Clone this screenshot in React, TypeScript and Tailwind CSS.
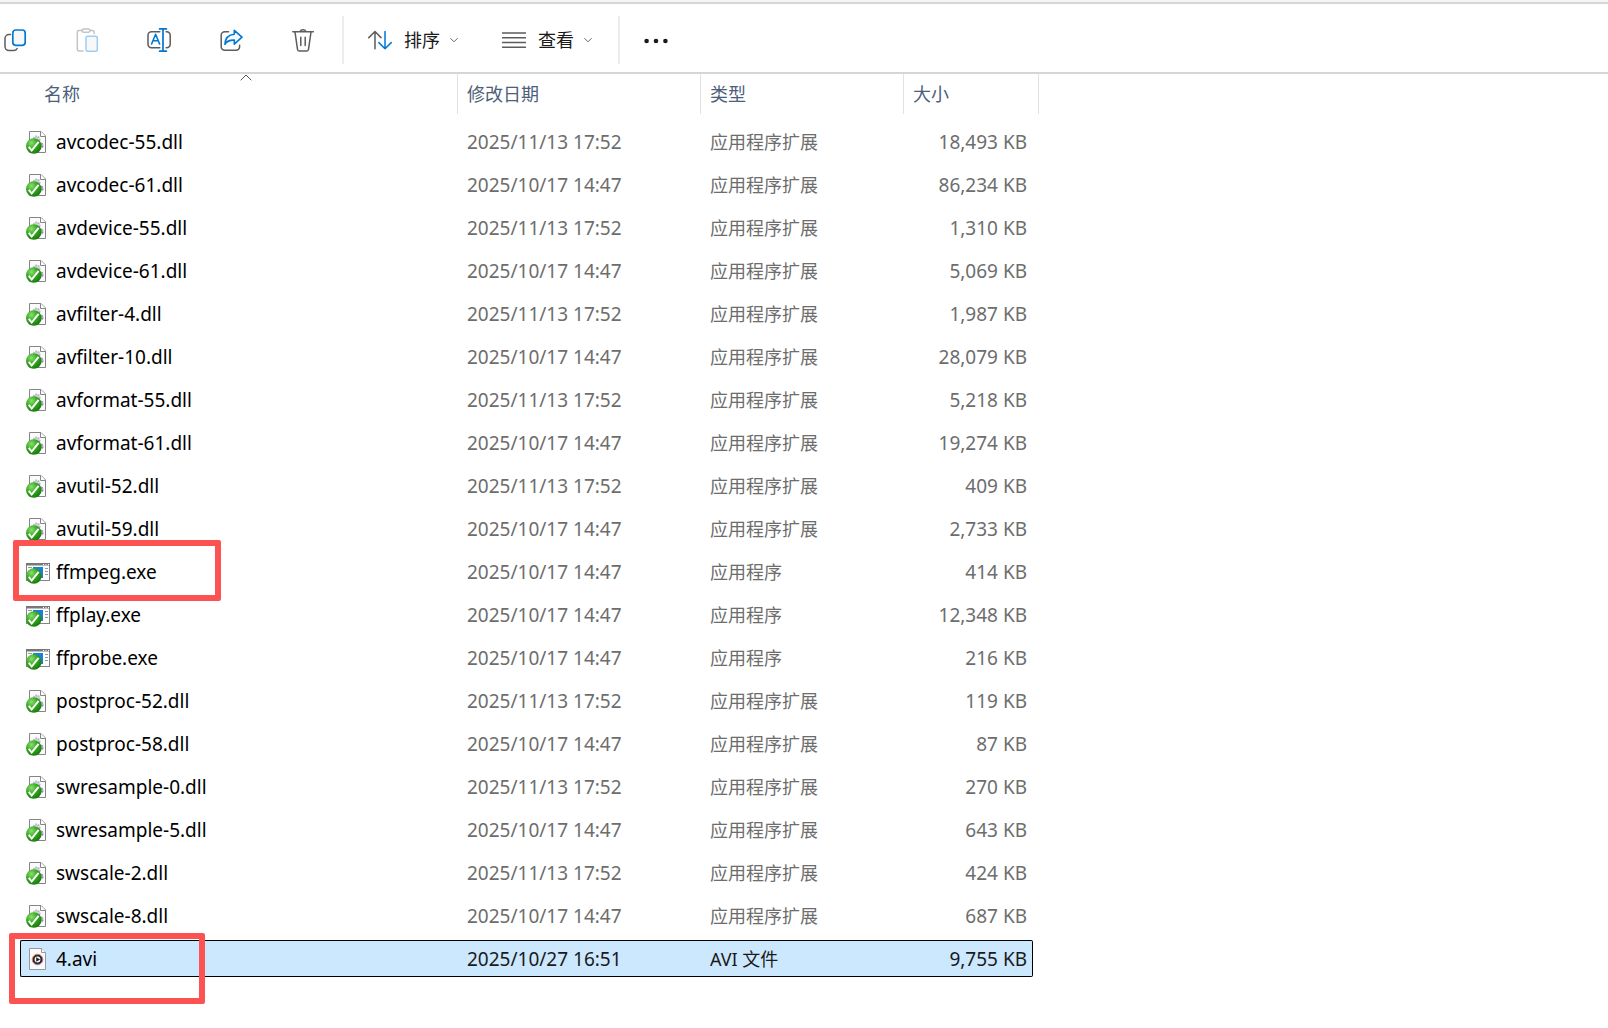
import type { ReactNode } from "react";

type FileKind = "dll" | "exe" | "avi";

type FileRow = {
  name: string;
  date: string;
  kind: FileKind;
  size: string;
  selected?: boolean;
  mark?: string; // classes of the red frame drawn around the row
};

const kindLabel: Record<FileKind, string> = {
  dll: "应用程序扩展",
  exe: "应用程序",
  avi: "AVI 文件",
};

const NOV = "2025/11/13 17:52";
const OCT = "2025/10/17 14:47";

const files: FileRow[] = [
  { name: "avcodec-55.dll", date: NOV, kind: "dll", size: "18,493 KB" },
  { name: "avcodec-61.dll", date: OCT, kind: "dll", size: "86,234 KB" },
  { name: "avdevice-55.dll", date: NOV, kind: "dll", size: "1,310 KB" },
  { name: "avdevice-61.dll", date: OCT, kind: "dll", size: "5,069 KB" },
  { name: "avfilter-4.dll", date: NOV, kind: "dll", size: "1,987 KB" },
  { name: "avfilter-10.dll", date: OCT, kind: "dll", size: "28,079 KB" },
  { name: "avformat-55.dll", date: NOV, kind: "dll", size: "5,218 KB" },
  { name: "avformat-61.dll", date: OCT, kind: "dll", size: "19,274 KB" },
  { name: "avutil-52.dll", date: NOV, kind: "dll", size: "409 KB" },
  { name: "avutil-59.dll", date: OCT, kind: "dll", size: "2,733 KB" },
  { name: "ffmpeg.exe", date: OCT, kind: "exe", size: "414 KB", mark: "-top-[10px] -left-[7px] w-[208px] h-[61px]" },
  { name: "ffplay.exe", date: OCT, kind: "exe", size: "12,348 KB" },
  { name: "ffprobe.exe", date: OCT, kind: "exe", size: "216 KB" },
  { name: "postproc-52.dll", date: NOV, kind: "dll", size: "119 KB" },
  { name: "postproc-58.dll", date: OCT, kind: "dll", size: "87 KB" },
  { name: "swresample-0.dll", date: NOV, kind: "dll", size: "270 KB" },
  { name: "swresample-5.dll", date: OCT, kind: "dll", size: "643 KB" },
  { name: "swscale-2.dll", date: NOV, kind: "dll", size: "424 KB" },
  { name: "swscale-8.dll", date: OCT, kind: "dll", size: "687 KB" },
  {
    name: "4.avi",
    date: "2025/10/27 16:51",
    kind: "avi",
    size: "9,755 KB",
    selected: true,
    mark: "-top-1 -left-[11px] w-[196px] h-[71px]",
  },
];

const GRAY = "#5c5c5c";
const BLUE = "#0078d4";

function Glyph({ children }: { children: ReactNode }) {
  return (
    <svg width="24" height="24" viewBox="0 0 24 24" fill="none" strokeWidth="1.5" strokeLinecap="round" strokeLinejoin="round" className="shrink-0">
      {children}
    </svg>
  );
}

const CopyIcon = () => (
  <Glyph>
    <path stroke={GRAY} d="M7.5 6.6H6a4 4 0 0 0-4 4v8a4 4 0 0 0 4 4h4.5c1.7 0 3-.8 3.6-2.1" />
    <rect x="9.8" y="2" width="12.4" height="15.3" rx="3" stroke={BLUE} fill="#f8f8f8" strokeWidth="1.7" />
  </Glyph>
);

const PasteIcon = () => (
  <Glyph>
    <path stroke="#c4c4c4" d="M7 2.5H4a1.700 1.700 0 0 0-1.700 1.700v17a1.700 1.700 0 0 0 1.700 1.700h4M15 2.5h2.500a1.700 1.700 0 0 1 1.700 1.700V5.500" />
    <rect x="7" y=".9" width="8" height="3.4" rx="1.7" stroke="#c4c4c4" />
    <rect x="11" y="8.2" width="11.3" height="15" rx="1.5" stroke="#9dcef2" fill="#f8f8f8" />
  </Glyph>
);

const RenameIcon = () => (
  <Glyph>
    <path stroke={GRAY} d="M12.8 3.8H4.500a3.500 3.500 0 0 0-3.500 3.500v9a3.500 3.500 0 0 0 3.500 3.500h8.300M19.200 3.800h.5a3.500 3.500 0 0 1 3.500 3.500v9a3.500 3.500 0 0 1-3.500 3.500h-.5" />
    <path stroke={BLUE} d="m4.6 16 4-9.7 4 9.7M6 12.8h5.2" strokeWidth="1.6" />
    <path stroke={BLUE} d="M12.6.9h6.8M12.6 23.2h6.8M16 .9v22.3" strokeWidth="1.7" />
  </Glyph>
);

const ShareIcon = () => (
  <Glyph>
    <path stroke={GRAY} d="M9.5 3.8H5.700A3.500 3.500 0 0 0 2.200 7.300v11.400a3.500 3.500 0 0 0 3.500 3.500h11.400a3.500 3.500 0 0 0 3.500-3.500v-1.400" />
    <path stroke={BLUE} fill="#f8f8f8" strokeWidth="1.6" d="M15.3 2.3 23 9.2l-7.7 6.9v-4c-4.3-.2-7.4 1-9.4 4.1.3-5.7 3.7-9.4 9.4-9.900z" />
  </Glyph>
);

const TrashIcon = () => (
  <Glyph>
    <path stroke={GRAY} d="M1.8 3.7h20.5M9 3.5a3.200 2.700 0 0 1 6 0M4 4l2.500 17.300c.2 1.100.9 1.800 2 1.800h7c1.100 0 1.800-.7 2-1.800L20 4M9.800 9.300v8.200M14.200 9.300v8.200" />
  </Glyph>
);

const SortIcon = () => (
  <Glyph>
    <path stroke={GRAY} d="M7 20.7V3.5M.8 9.6 7 3.5l6 6.1" />
    <path stroke={BLUE} d="M17 3.5v17.2M10.9 14.6 17 20.7l6.200-6.100" />
  </Glyph>
);

const ViewIcon = () => (
  <Glyph>
    <path stroke={GRAY} strokeLinecap="butt" d="M0 5h24M0 9.7h24M0 14.5h24M0 19.3h24" />
  </Glyph>
);

const MoreIcon = () => (
  <Glyph>
    <g fill="#1a1a1a">
      <circle cx="2.6" cy="13" r="2.3" />
      <circle cx="12" cy="13" r="2.3" />
      <circle cx="21.4" cy="13" r="2.3" />
    </g>
  </Glyph>
);

const Chevron = () => (
  <svg width="8" height="8" viewBox="0 0 8 8" fill="none" stroke="#666" className="shrink-0">
    <path d="m.4 2.200 3.600 3.600 3.600-3.600" />
  </svg>
);

// green tick badge shared by the dll and exe icons
const Tick = () => (
  <>
    <circle cx="7.8" cy="16" r="7.8" fill="url(#tick)" />
    <path d="m2.8 16.8 2.900 3.700 6.900-8.700" stroke="#fff" strokeWidth="2" fill="none" />
  </>
);

function FileIcon({ kind }: { kind: FileKind }) {
  if (kind === "exe") {
    return (
      <svg width="24" height="24" viewBox="0 0 24 24" className="shrink-0">
        <rect x=".5" y="3.5" width="23" height="17" fill="#fff" stroke="#858585" />
        <path d="M0 3h24v2.500H0z" fill="#787878" />
        <path d="M17 4.5h1M19.500 4.5h1M22 4.5h1" stroke="#fff" />
        <path d="M7 7h10v11H7z" fill="#1683d8" />
        <path d="M2 7.5h4M19 8.500h3M19 11.500h3M19 14.500h3" stroke="#9a9a9a" />
        <Tick />
      </svg>
    );
  }
  if (kind === "avi") {
    return (
      <svg width="24" height="24" viewBox="0 0 24 24" className="shrink-0">
        <path d="M3.5 1.5h12l4 4v17h-16z" fill="#fafafa" stroke="#999" />
        <path d="M15.5 1.5v4h4" fill="#fff" stroke="#999" />
        <circle cx="11.5" cy="12.5" r="4" fill="#fff" stroke="#2b2830" strokeWidth="2.2" />
        <circle cx="11.5" cy="12.5" r="5.3" fill="none" stroke="url(#ring)" strokeWidth=".9" />
        <path d="m10.2 10.200 4 2.300-4 2.300z" fill="#222" />
      </svg>
    );
  }
  return (
    <svg width="24" height="24" viewBox="0 0 24 24" className="shrink-0">
      <path d="M3.5 1.5h11.500l4.500 4.500v16.500h-16z" fill="#fbfbfb" stroke="#858585" />
      <path d="M14.5 1.5v5h5" fill="#fff" stroke="#858585" />
      <circle cx="10.5" cy="9.5" r="3" stroke="#b4bac8" strokeWidth="2" strokeDasharray="1.7 .8" fill="#d5d9e2" />
      <circle cx="14.5" cy="15.5" r="2.2" stroke="#8d94a8" strokeWidth="2" strokeDasharray="1.7 .8" fill="#b4bac8" />
      <Tick />
    </svg>
  );
}

const actions = [
  { label: "复制", icon: <CopyIcon /> },
  { label: "粘贴", icon: <PasteIcon />, disabled: true },
  { label: "重命名", icon: <RenameIcon /> },
  { label: "共享", icon: <ShareIcon /> },
  { label: "删除", icon: <TrashIcon /> },
];

const Divider = () => <div className="h-12 w-0.5 shrink-0 bg-[#ededed]" />;

function Toolbar() {
  return (
    <div className="flex h-[72px] items-center overflow-hidden border-y-2 border-[#d6d6d6] bg-white pt-1">
      <div className="-ml-[9px] mr-[15px] flex gap-6">
        {actions.map((a) => (
          <button key={a.label} aria-label={a.label} disabled={a.disabled} className="flex h-12 w-12 items-center justify-center">
            {a.icon}
          </button>
        ))}
      </div>
      <Divider />
      <button className="ml-6 flex h-12 items-center text-[#1a1a1a]">
        <SortIcon />
        <span className="ml-3 mr-2.5">排序</span>
        <Chevron />
      </button>
      <button className="ml-11 mr-[26px] flex h-12 items-center text-[#1a1a1a]">
        <ViewIcon />
        <span className="ml-3 mr-2.5">查看</span>
        <Chevron />
      </button>
      <Divider />
      <button aria-label="更多" className="ml-6 flex h-12 items-center">
        <MoreIcon />
      </button>
    </div>
  );
}

function Row({ file }: { file: FileRow }) {
  const cell = `flex h-[37px] items-center ${file.selected ? "border-y border-black bg-[#cce8ff] text-[#1a1a1a]" : "text-[#6d6d6d]"}`;

  return (
    <tr className="h-[43px]">
      <td className="relative p-0">
        <div className={`${cell} gap-1.5 text-[19px] ${file.selected ? "rounded-l-xs border-l pl-[5px]" : "pl-1.5"}`}>
          <FileIcon kind={file.kind} />
          <span className="text-black">{file.name}</span>
        </div>
        {file.mark && <div className={`pointer-events-none absolute z-10 rounded-xs border-[6px] border-[#fd5252] ${file.mark}`} />}
      </td>
      <td className="p-0">
        <div className={`${cell} pl-[9px] text-[19px]`}>{file.date}</div>
      </td>
      <td className="p-0">
        <div className={`${cell} pl-[9px]`}>{kindLabel[file.kind]}</div>
      </td>
      <td className="p-0 pr-1.5">
        <div className={`${cell} justify-end text-[19px] ${file.selected ? "rounded-r-xs border-r pr-[5px]" : "pr-1.5"}`}>{file.size}</div>
      </td>
    </tr>
  );
}

export default function App() {
  return (
    <div className="min-h-screen overflow-x-auto bg-white font-['Noto_Sans','Noto_Sans_CJK_SC',sans-serif] text-[18px] leading-6">
      <svg width="0" height="0" className="absolute">
        <defs>
          <radialGradient id="tick" cx=".35" cy=".3" r=".75">
            <stop offset="0" stopColor="#8be070" />
            <stop offset=".5" stopColor="#36a81e" />
            <stop offset="1" stopColor="#16780c" />
          </radialGradient>
          <linearGradient id="ring" x1="0" y1="0" x2="1" y2="1">
            <stop offset="0" stopColor="#f58220" />
            <stop offset="1" stopColor="#8a5cc0" />
          </linearGradient>
        </defs>
      </svg>

      <header className="bg-[#f5f5f5] pt-0.5">
        <Toolbar />
      </header>

      <table className="ml-5 table-fixed border-collapse whitespace-nowrap">
        <colgroup>
          <col className="w-[438px]" />
          <col className="w-[243px]" />
          <col className="w-[203px]" />
          <col className="w-[135px]" />
        </colgroup>
        <thead className="text-left text-[#4c607a]">
          <tr>
            <th className="p-0 pb-1.5 font-normal">
              <div className="border-r border-[#e2e2e2] pl-3.5">
                <button className="relative flex h-10 w-full items-center pl-2.5">
                  名称
                  <svg width="12" height="7" viewBox="0 0 12 7" fill="none" stroke="#555" className="absolute left-1/2 top-0 -translate-x-1/2">
                    <path d="M.7 6.300 6 1l5.300 5.300" />
                  </svg>
                </button>
              </div>
            </th>
            {["修改日期", "类型", "大小"].map((label) => (
              <th key={label} className="p-0 pb-1.5 font-normal">
                <button className="flex h-10 w-full items-center border-r border-[#e2e2e2] pl-[9px]">{label}</button>
              </th>
            ))}
          </tr>
        </thead>
        <tbody>
          {files.map((f) => (
            <Row key={f.name} file={f} />
          ))}
        </tbody>
      </table>
    </div>
  );
}
